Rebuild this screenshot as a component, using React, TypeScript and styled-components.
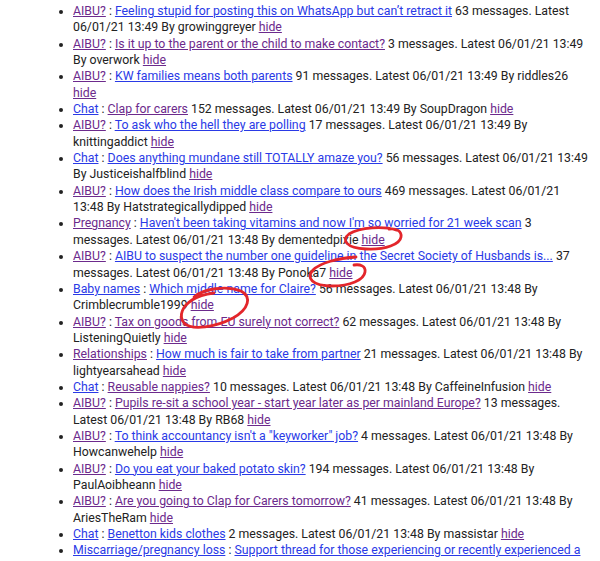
import React from "react";
import styled, { createGlobalStyle } from "styled-components";

const GlobalStyle = createGlobalStyle`
  html, body { margin: 0; padding: 0; background: #ffffff; }
  body { font-family: Roboto, "Noto Sans", Arial, sans-serif; font-size: 12.3px; color: #222222; }
`;

const Page = styled.div`
  position: relative;
  width: 600px;
  height: 561px;
  overflow: hidden;
  padding-top: 3px;
  box-sizing: border-box;
`;

const List = styled.ul`
  margin: 0;
  padding: 0 8px 0 73px;
  list-style: disc;
  line-height: 16.35px;
`;

const Item = styled.li`
  margin: 0;
  padding: 0;
`;

const Link = styled.a<{ $visited?: boolean }>`
  color: ${(p) => (p.$visited ? "#6c2a8c" : "#2a3ae6")};
  text-decoration: underline;
  text-underline-offset: 1px;
`;

const Overlay = styled.svg`
  position: absolute;
  left: 0;
  top: 0;
  pointer-events: none;
`;

type Thread = {
  cat: string;
  catV: boolean;
  title: string;
  titleV: boolean;
  meta?: string;
  hide?: boolean;
};

const threads: Thread[] = [
  { cat: "AIBU?", catV: true, title: "Feeling stupid for posting this on WhatsApp but can\u2019t retract it", titleV: false, meta: "63 messages. Latest 06/01/21 13:49 By growinggreyer", hide: true },
  { cat: "AIBU?", catV: true, title: "Is it up to the parent or the child to make contact?", titleV: true, meta: "3 messages. Latest 06/01/21 13:49 By overwork", hide: true },
  { cat: "AIBU?", catV: true, title: "KW families means both parents", titleV: false, meta: "91 messages. Latest 06/01/21 13:49 By riddles26", hide: true },
  { cat: "Chat", catV: false, title: "Clap for carers", titleV: true, meta: "152 messages. Latest 06/01/21 13:49 By SoupDragon", hide: true },
  { cat: "AIBU?", catV: true, title: "To ask who the hell they are polling", titleV: false, meta: "17 messages. Latest 06/01/21 13:49 By knittingaddict", hide: true },
  { cat: "Chat", catV: false, title: "Does anything mundane still TOTALLY amaze you?", titleV: false, meta: "56 messages. Latest 06/01/21 13:49 By Justiceishalfblind", hide: true },
  { cat: "AIBU?", catV: true, title: "How does the Irish middle class compare to ours", titleV: false, meta: "469 messages. Latest 06/01/21 13:48 By Hatstrategicallydipped", hide: true },
  { cat: "Pregnancy", catV: true, title: "Haven't been taking vitamins and now I'm so worried for 21 week scan", titleV: false, meta: "3 messages. Latest 06/01/21 13:48 By dementedpixie", hide: true },
  { cat: "AIBU?", catV: true, title: "AIBU to suspect the number one guideline in the Secret Society of Husbands is...", titleV: false, meta: "37 messages. Latest 06/01/21 13:48 By Ponoka7", hide: true },
  { cat: "Baby names", catV: false, title: "Which middle name for Claire?", titleV: false, meta: "56 messages. Latest 06/01/21 13:48 By Crimblecrumble1999", hide: true },
  { cat: "AIBU?", catV: true, title: "Tax on goods from EU surely not correct?", titleV: true, meta: "62 messages. Latest 06/01/21 13:48 By ListeningQuietly", hide: true },
  { cat: "Relationships", catV: true, title: "How much is fair to take from partner", titleV: false, meta: "21 messages. Latest 06/01/21 13:48 By lightyearsahead", hide: true },
  { cat: "Chat", catV: false, title: "Reusable nappies?", titleV: true, meta: "10 messages. Latest 06/01/21 13:48 By CaffeineInfusion", hide: true },
  { cat: "AIBU?", catV: true, title: "Pupils re-sit a school year - start year later as per mainland Europe?", titleV: true, meta: "13 messages. Latest 06/01/21 13:48 By RB68", hide: true },
  { cat: "AIBU?", catV: true, title: "To think accountancy isn't a \"keyworker\" job?", titleV: false, meta: "4 messages. Latest 06/01/21 13:48 By Howcanwehelp", hide: true },
  { cat: "AIBU?", catV: true, title: "Do you eat your baked potato skin?", titleV: false, meta: "194 messages. Latest 06/01/21 13:48 By PaulAoibheann", hide: true },
  { cat: "AIBU?", catV: true, title: "Are you going to Clap for Carers tomorrow?", titleV: true, meta: "41 messages. Latest 06/01/21 13:48 By AriesTheRam", hide: true },
  { cat: "Chat", catV: false, title: "Benetton kids clothes", titleV: false, meta: "2 messages. Latest 06/01/21 13:48 By massistar", hide: true },
  { cat: "Miscarriage/pregnancy loss", catV: false, title: "Support thread for those experiencing or recently experienced a miscarriage", titleV: false, meta: "8 messages. Latest 06/01/21 13:48 By someone", hide: true },
];

export default function App() {
  return (
    <>
      <GlobalStyle />
      <Page>
        <List>
          {threads.map((t, i) => (
            <Item key={i}>
              <Link href="#" $visited={t.catV}>{t.cat}</Link>
              {" : "}
              <Link href="#" $visited={t.titleV}>{t.title}</Link>
              {t.meta ? " " + t.meta + " " : " "}
              {t.hide && <Link href="#" $visited>hide</Link>}
            </Item>
          ))}
        </List>
        <Overlay width="600" height="561" viewBox="0 0 600 561">
          <g fill="none" stroke="#e3262b" strokeWidth="2.8" strokeLinecap="round" strokeLinejoin="round">
            <path d="M396 230 C 384 226, 360 227, 349 234 C 341 240, 346 248, 366 249 C 386 250, 400 244, 401 237 C 402 231, 396 228, 389 229" />
            <path d="M356 257 C 338 258, 320 263, 313 270 C 306 278, 312 286, 332 286 C 350 286, 364 280, 365 272 C 366 266, 360 264, 354 265" />
            <path d="M194 297 C 203 289, 226 285, 241 291 C 252 297, 249 309, 233 318 C 216 327, 192 331, 184 323 C 178 315, 183 306, 192 300 C 198 296, 206 294, 214 293" />
          </g>
        </Overlay>
      </Page>
    </>
  );
}
